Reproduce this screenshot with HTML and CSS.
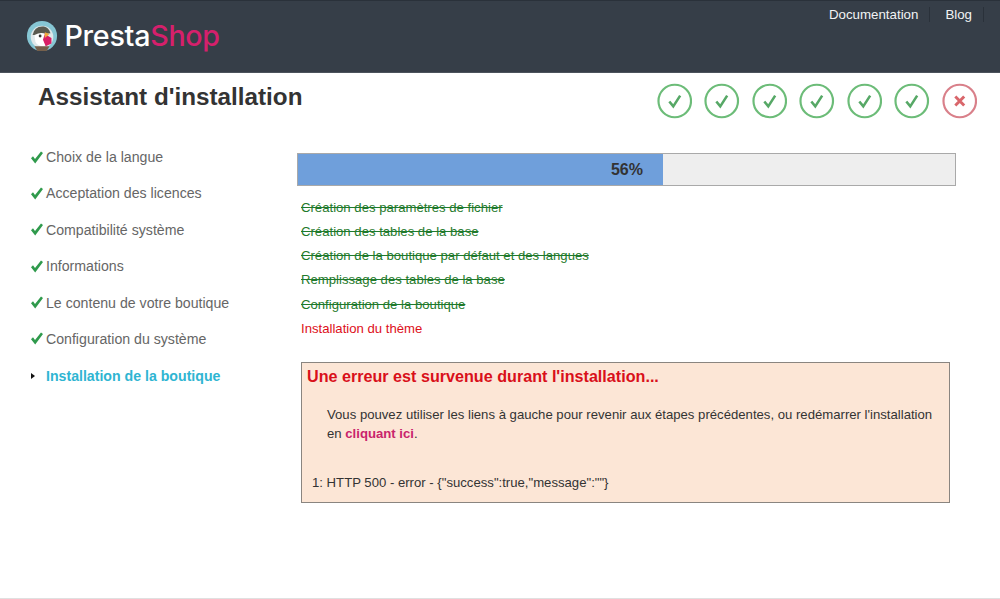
FILE: index.html
```html
<!DOCTYPE html>
<html lang="fr">
<head>
<meta charset="utf-8">
<title>Assistant d'installation</title>
<link rel="stylesheet" href="styles.css">
</head>
<body>
<header class="top">
  <div class="brand">
    <svg class="logo" width="32" height="32" viewBox="0 0 34 34">
      <circle cx="17" cy="17" r="16" fill="#86c6d4"/>
      <circle cx="17" cy="18" r="12" fill="#dfe8ea"/>
      <path d="M7 16 Q9 6 19 7 Q24 8 26 14 L12 16 Z" fill="#5a5a50"/>
      <path d="M9 16 Q16 12 21 15 L20 28 Q12 28 10 23 Z" fill="#fff"/>
      <circle cx="15" cy="17" r="1.5" fill="#333"/>
      <path d="M20 15 L27 19 L27 25 L21 28 L18 21 Z" fill="#d81f66"/>
      <path d="M20 13 L25 15 L20 19 Z" fill="#f3a93c"/>
      <path d="M9 28 H25 L22 33 H12 Z" fill="#75604c"/>
    </svg>
    <span class="wordmark">Presta<span class="wordmark-shop">Shop</span></span>
  </div>
  <nav class="toplinks">
    <a class="toplink">Documentation</a>
    <a class="toplink">Blog</a>
  </nav>
</header>

<div class="titlebar">
  <h1 class="title">Assistant d'installation</h1>
  <div class="badges">
    <svg class="badge" viewBox="0 0 36 36"><circle class="ok-ring" cx="18" cy="18" r="16.5"/><path class="ok-mark" d="M12.5 18.5 L16.5 23.5 L23.5 12.5"/></svg>
    <svg class="badge" viewBox="0 0 36 36"><circle class="ok-ring" cx="18" cy="18" r="16.5"/><path class="ok-mark" d="M12.5 18.5 L16.5 23.5 L23.5 12.5"/></svg>
    <svg class="badge" viewBox="0 0 36 36"><circle class="ok-ring" cx="18" cy="18" r="16.5"/><path class="ok-mark" d="M12.5 18.5 L16.5 23.5 L23.5 12.5"/></svg>
    <svg class="badge" viewBox="0 0 36 36"><circle class="ok-ring" cx="18" cy="18" r="16.5"/><path class="ok-mark" d="M12.5 18.5 L16.5 23.5 L23.5 12.5"/></svg>
    <svg class="badge" viewBox="0 0 36 36"><circle class="ok-ring" cx="18" cy="18" r="16.5"/><path class="ok-mark" d="M12.5 18.5 L16.5 23.5 L23.5 12.5"/></svg>
    <svg class="badge" viewBox="0 0 36 36"><circle class="ok-ring" cx="18" cy="18" r="16.5"/><path class="ok-mark" d="M12.5 18.5 L16.5 23.5 L23.5 12.5"/></svg>
    <svg class="badge" viewBox="0 0 36 36"><circle class="ko-ring" cx="18" cy="18" r="16.5"/><path class="ko-mark" d="M13.5 13.5 L22.5 22.5 M22.5 13.5 L13.5 22.5"/></svg>
  </div>
</div>

<main class="content">
  <ul class="steps">
    <li class="step"><svg class="check" viewBox="0 0 13 13"><path d="M1 7.2 L3 5.2 L5 8 L11 0.5 L13 2 L5.2 12.5 Z"/></svg>Choix de la langue</li>
    <li class="step"><svg class="check" viewBox="0 0 13 13"><path d="M1 7.2 L3 5.2 L5 8 L11 0.5 L13 2 L5.2 12.5 Z"/></svg>Acceptation des licences</li>
    <li class="step"><svg class="check" viewBox="0 0 13 13"><path d="M1 7.2 L3 5.2 L5 8 L11 0.5 L13 2 L5.2 12.5 Z"/></svg>Compatibilité système</li>
    <li class="step"><svg class="check" viewBox="0 0 13 13"><path d="M1 7.2 L3 5.2 L5 8 L11 0.5 L13 2 L5.2 12.5 Z"/></svg>Informations</li>
    <li class="step"><svg class="check" viewBox="0 0 13 13"><path d="M1 7.2 L3 5.2 L5 8 L11 0.5 L13 2 L5.2 12.5 Z"/></svg>Le contenu de votre boutique</li>
    <li class="step"><svg class="check" viewBox="0 0 13 13"><path d="M1 7.2 L3 5.2 L5 8 L11 0.5 L13 2 L5.2 12.5 Z"/></svg>Configuration du système</li>
    <li class="step step-current"><span class="arrow"></span>Installation de la boutique</li>
  </ul>

  <section class="install">
    <div class="progress">
      <div class="progress-fill" style="width:365px">56%</div>
    </div>
    <ul class="tasks">
      <li class="task task-done">Création des paramètres de fichier</li>
      <li class="task task-done">Création des tables de la base</li>
      <li class="task task-done">Création de la boutique par défaut et des langues</li>
      <li class="task task-done">Remplissage des tables de la base</li>
      <li class="task task-done">Configuration de la boutique</li>
      <li class="task task-fail">Installation du thème</li>
    </ul>
    <div class="error">
      <h3 class="error-title">Une erreur est survenue durant l'installation...</h3>
      <p class="error-text">Vous pouvez utiliser les liens à gauche pour revenir aux étapes précédentes, ou redémarrer l'installation en <a class="error-link">cliquant ici</a>.</p>
      <p class="error-log">1: HTTP 500 - error - {"success":true,"message":""}</p>
    </div>
  </section>
</main>
<footer class="bottom"></footer>
</body>
</html>
```
FILE: styles.css
```css
* { box-sizing: border-box; }
html, body { margin: 0; padding: 0; height: 100%; }
body {
  background: #fff;
  font-family: "Liberation Sans", Arial, sans-serif;
  color: #333;
  height: 599px;
  overflow: hidden;
  display: flex;
  flex-direction: column;
}
.top {
  height: 73px;
  flex: none;
  background: #363e48;
  border-top: 1px solid #2a313a;
  border-bottom: 1px solid #4c535c;
  display: flex;
  justify-content: space-between;
  align-items: flex-start;
}
.brand {
  display: flex;
  align-items: center;
  margin: 19px 0 0 25.5px;
  gap: 7px;
}
.logo { flex: none; }
.wordmark {
  font-family: Inter, sans-serif;
  font-weight: 500;
  font-size: 28.7px;
  line-height: 32px;
  color: #fff;
  letter-spacing: -0.3px;
}
.wordmark-shop { color: #d5206c; }
.toplinks {
  display: flex;
  margin: 6px 0 0 0;
  padding-right: 16px;
}
.toplink {
  color: #f2f3f4;
  font-size: 13.3px;
  line-height: 15px;
  padding: 0 11px 0 0;
  margin-right: 15px;
  border-right: 1px solid #2a313a;
}
.toplink:last-child { margin-right: 0; }
.titlebar {
  flex: none;
  height: 62px;
  display: flex;
  justify-content: space-between;
  align-items: flex-start;
  padding: 9px 23px 0 38px;
}
.title {
  margin: 0;
  font-size: 24.25px;
  line-height: 30px;
  color: #333;
  font-weight: bold;
}
.badges { display: flex; gap: 12px; margin-top: 1px; }
.badge { width: 35.5px; height: 36px; display: block; }
.ok-ring { fill: none; stroke: #6cbc78; stroke-width: 2.2; }
.ok-mark { fill: none; stroke: #56a866; stroke-width: 2.6; }
.ko-ring { fill: none; stroke: #d9808a; stroke-width: 2.2; }
.ko-mark { fill: none; stroke: #d9666b; stroke-width: 3; }
.content {
  flex: 1;
  display: flex;
  align-items: flex-start;
  padding: 14px 44px 0 30px;
}
.steps {
  list-style: none;
  margin: 0;
  padding: 0;
  width: 267px;
  flex: none;
  display: flex;
  flex-direction: column;
  gap: 20.4px;
}
.step {
  display: flex;
  align-items: center;
  height: 16px;
  font-size: 14.15px;
  color: #666;
}
.check { width: 13px; height: 13px; fill: #2f9a4c; margin-right: 3px; flex: none; }
.arrow {
  width: 0;
  height: 0;
  margin: 0 11px 0 1px;
  border-left: 4px solid #111;
  border-top: 3.5px solid transparent;
  border-bottom: 3.5px solid transparent;
}
.step-current { font-weight: bold; color: #2fb5d2; margin-top: 1px; }
.install { flex: 1; min-width: 0; margin-top: 4px; }
.progress {
  height: 33px;
  width: 659px;
  background: #eee;
  border: 1px solid #a9a9a9;
}
.progress-fill {
  height: 31px;
  background: #6f9fdb;
  text-align: right;
  padding-right: 20px;
  font-size: 16px;
  font-weight: bold;
  line-height: 31px;
  color: #333;
}
.tasks {
  list-style: none;
  margin: 11.5px 0 0 4px;
  padding: 0;
}
.task {
  height: 24.3px;
  line-height: 19px;
  font-size: 13.15px;
}
.task-done { color: #1f7a2c; text-decoration: line-through; }
.task-fail { color: #dd0f1a; }
.error {
  margin: 18.5px 0 0 4px;
  width: 649px;
  height: 141px;
  background: #fce6d6;
  border: 1px solid #8a8580;
  padding: 4px 10px 0 5px;
}
.error-title {
  margin: 0;
  font-size: 16.15px;
  line-height: 18px;
  font-weight: bold;
  color: #d9101a;
}
.error-text {
  margin: 20px 0 0 20px;
  font-size: 13.15px;
  line-height: 19px;
  color: #333;
}
.error-link { color: #c9246c; font-weight: bold; }
.error-log {
  margin: 31px 0 0 5px;
  font-size: 13.15px;
  line-height: 18px;
  color: #333;
}
.bottom {
  flex: none;
  height: 1px;
  background: #e0e0e0;
}
```
